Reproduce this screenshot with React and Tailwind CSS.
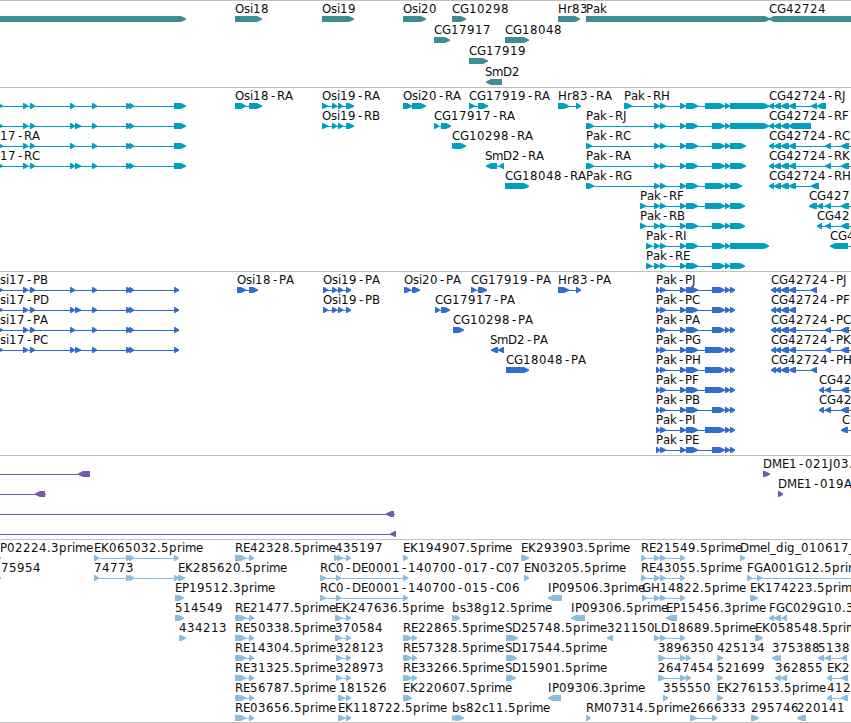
import React from "react";

// Pixel advances used to space the feature labels.
const ADVANCE = {
  C: 8, G: 9, O: 9, D: 9, R: 8, P: 7, A: 8, B: 7, E: 7, F: 7, H: 9, I: 4, J: 4, K: 8, L: 7,
  M: 10, N: 9, S: 7, a: 7, b: 8, c: 6, d: 8, e: 7, g: 8, i: 3, k: 7, l: 3, m: 11, p: 8, r: 5,
  s: 6, ".": 4, "-": 8, _: 6,
};

const labelPositions = (text, x) => {
  let at = x;
  return Array.from(text).map((ch) => {
    const here = ch === "-" ? at + 2 : at;
    at += ADVANCE[ch] ?? 8;
    return here;
  });
};

// f(row, label, labelX, blocks, options): blocks are [start, end] pairs.
const f = (row, label, x, blocks, o = {}) => ({ row, label, x, blocks, ...o });
const rev = { rev: true };
const revOut = { rev: true, to: 856 };

const genes = [
  f(0, "", 0, [[-5, 186]]),
  f(0, "Osi18", 235, [[235, 262]]),
  f(0, "Osi19", 322, [[322, 354]]),
  f(0, "Osi20", 403, [[403, 426]]),
  f(0, "CG10298", 452, [[452, 466]]),
  f(0, "Hr83", 558, [[558, 580]]),
  f(0, "Pak", 586, [[586, 770]]),
  f(0, "CG42724", 769, [[769, 860]], rev),
  f(1, "CG17917", 434, [[434, 450]]),
  f(1, "CG18048", 505, [[505, 529]]),
  f(2, "CG17919", 469, [[469, 488]]),
  f(3, "SmD2", 485, [[486, 502]], rev),
];

const osi17 = (extra, last) => [
  [-3, 3], [23, 28], [30, 35], [70, 75], ...(extra ? [[75, 81]] : []), [92, 97], [126, 131], [129, 134], last,
];
const osi19r = [[322, 328], [332, 337], [338, 343], [346, 354]];
const pakR = (first, mid, end) => [
  first, [654, 660], [660, 666], [680, 686], [686, 698], [mid, 725], [725, 730], [730, end],
];
const cg = [[769, 774], [774, 781], [781, 789], [789, 796]];

const transcripts = [
  f(0, "", 0, osi17(false, [174, 186]), { from: -5 }),
  f(1, "", 0, osi17(true, [174, 186]), { from: -5 }),
  f(2, "17-RA", 0, osi17(false, [174, 186]), { from: -5 }),
  f(3, "17-RC", 0, osi17(true, [174, 186]), { from: -5 }),
  f(0, "Osi18-RA", 235, [[235, 246], [249, 262]]),
  f(0, "Osi19-RA", 322, osi19r),
  f(1, "Osi19-RB", 322, osi19r),
  f(0, "Osi20-RA", 403, [[403, 412], [412, 426]]),
  f(0, "CG17919-RA", 469, [[469, 475], [478, 488]]),
  f(1, "CG17917-RA", 434, [[434, 439], [441, 451]]),
  f(2, "CG10298-RA", 452, [[452, 455], [454, 466]]),
  f(3, "SmD2-RA", 485, [[486, 497], [499, 504]], rev),
  f(4, "CG18048-RA", 505, [[505, 529]]),
  f(0, "Hr83-RA", 558, [[558, 569], [576, 581]]),
  f(0, "Pak-RH", 624, pakR([624, 632], 705, 769)),
  f(1, "Pak-RJ", 586, pakR([586, 594], 712, 769)),
  f(2, "Pak-RC", 586, pakR([586, 592], 712, 746)),
  f(3, "Pak-RA", 586, pakR([586, 594], 712, 746)),
  f(4, "Pak-RG", 586, pakR([586, 594], 705, 742)),
  f(5, "Pak-RF", 640, pakR([640, 646], 705, 745)),
  f(6, "Pak-RB", 640, pakR([640, 646], 712, 745)),
  f(7, "Pak-RI", 646, pakR([646, 652], 712, 769)),
  f(8, "Pak-RE", 646, pakR([646, 652], 712, 745)),
  f(0, "CG42724-RJ", 769, [...cg, [811, 817], [817, 826]], rev),
  f(1, "CG42724-RF", 769, [[769, 774], [774, 781], [781, 789], [788, 811]], rev),
  f(2, "CG42724-RC", 769, [...cg, [825, 831], [841, 849]], revOut),
  f(3, "CG42724-RK", 769, [...cg, [825, 831], [841, 849]], revOut),
  f(4, "CG42724-RH", 769, [...cg, [811, 819]], rev),
  f(5, "CG427", 809, [[809, 817], [817, 823], [825, 831], [841, 849]], revOut),
  f(6, "CG42", 817, [[817, 822], [825, 831], [841, 849]], revOut),
  f(7, "CG4", 830, [[830, 848]], revOut),
];

const osi19p = [[323, 328], [332, 337], [338, 343], [346, 351]];
const pakP = (mid) => [[656, 660], [660, 666], [680, 686], [686, 698], [mid, 725], [725, 730], [730, 735]];
const cgP = [[771, 776], [775, 781], [781, 789], [789, 796]];
const proteins = [
  f(0, "si17-PB", 0, osi17(false, [174, 179]), { from: -5 }),
  f(1, "si17-PD", 0, osi17(true, [174, 179]), { from: -5 }),
  f(2, "si17-PA", 0, osi17(false, [174, 179]), { from: -5 }),
  f(3, "si17-PC", 0, osi17(true, [174, 179]), { from: -5 }),
  f(0, "Osi18-PA", 237, [[237, 246], [249, 258]]),
  f(0, "Osi19-PA", 323, osi19p),
  f(1, "Osi19-PB", 323, osi19p),
  f(0, "Osi20-PA", 404, [[404, 411], [412, 420]]),
  f(0, "CG17919-PA", 471, [[471, 476], [478, 487]]),
  f(1, "CG17917-PA", 435, [[435, 440], [441, 450]]),
  f(2, "CG10298-PA", 453, [[453, 464]]),
  f(3, "SmD2-PA", 490, [[491, 498], [498, 504]], rev),
  f(4, "CG18048-PA", 506, [[506, 529]]),
  f(0, "Hr83-PA", 558, [[558, 569], [576, 581]]),
  f(0, "Pak-PJ", 656, pakP(712)),
  f(1, "Pak-PC", 656, pakP(712)),
  f(2, "Pak-PA", 656, pakP(712)),
  f(3, "Pak-PG", 656, pakP(705)),
  f(4, "Pak-PH", 656, pakP(705)),
  f(5, "Pak-PF", 656, pakP(705)),
  f(6, "Pak-PB", 656, pakP(712)),
  f(7, "Pak-PI", 656, pakP(705)),
  f(8, "Pak-PE", 656, pakP(712)),
  f(0, "CG42724-PJ", 771, [...cgP, [811, 817]], rev),
  f(1, "CG42724-PF", 771, cgP, rev),
  f(2, "CG42724-PC", 771, [...cgP, [825, 831], [841, 849]], revOut),
  f(3, "CG42724-PK", 771, [...cgP, [825, 831], [841, 849]], revOut),
  f(4, "CG42724-PH", 771, [...cgP, [811, 817]], rev),
  f(5, "CG42", 819, [[819, 824], [825, 831], [841, 849]], revOut),
  f(6, "CG42", 819, [[819, 824], [825, 831], [841, 849]], revOut),
  f(7, "C", 842, [[841, 848]], revOut),
];

const clones = [
  f(0, "", 0, [[78, 90]], { rev: true, from: -5 }),
  f(1, "", 0, [[35, 45]], { rev: true, from: -5, to: 46 }),
  f(2, "", 0, [[386, 394]], { rev: true, from: -5, to: 395 }),
  f(3, "", 0, [[390, 396]], { rev: true, from: -5 }),
  f(0, "DME1-021J03.", 763, [[763, 770]]),
  f(1, "DME1-019A", 778, [[778, 783]]),
];

const ek = [[94, 99], [126, 131], [129, 134], [174, 179]];
const re = [[235, 246], [249, 254]];
const rc = [[320, 326], [336, 341], [403, 408]];
const re2 = [[641, 646], [654, 660], [660, 666], [680, 685]];
const re3 = [[403, 412], [412, 417]];
const osiA = [[335, 338], [336, 342], [346, 351]];
const osiB = [[336, 342], [346, 351]];
const osiC = [[338, 345], [346, 351]];
const ests = [
  f(0, "P02224.3prime", 0, [[-4, 1]]),
  f(0, "EK065032.5prime", 94, ek),
  f(0, "RE42328.5prime", 235, re),
  f(0, "435197", 335, [[334, 338], [337, 343], [346, 351]]),
  f(0, "EK194907.5prime", 403, [[403, 408]]),
  f(0, "EK293903.5prime", 521, [[521, 529]]),
  f(0, "RE21549.5prime", 641, re2),
  f(0, "Dmel_dig_010617_", 740, [[740, 745]]),
  f(1, "75954", 1, [[-4, 1]]),
  f(1, "74773", 94, ek),
  f(1, "EK285620.5prime", 178, [[178, 185]]),
  f(1, "RC0-DE0001-140700-017-C07", 320, rc),
  f(1, "EN03205.5prime", 524, [[524, 529]]),
  f(1, "RE43055.5prime", 641, re2),
  f(1, "FGA001G12.5prim", 747, [[747, 752], [757, 762]], { to: 856 }),
  f(2, "EP19512.3prime", 175, [[175, 184]]),
  f(2, "RC0-DE0001-140700-015-C06", 320, rc),
  f(2, "IP09506.3prime", 548, [[548, 562]], rev),
  f(2, "GH14822.5prime", 642, [[642, 647], [654, 660], [660, 666], [680, 685]]),
  f(2, "EK174223.5prim", 750, [[750, 758]]),
  f(3, "514549", 175, [[175, 184]]),
  f(3, "RE21477.5prime", 235, re),
  f(3, "EK247636.5prime", 335, osiA),
  f(3, "bs38g12.5prime", 452, [[452, 456], [455, 460]]),
  f(3, "IP09306.5prime", 571, [[571, 585]], rev),
  f(3, "EP15456.3prime", 666, [[666, 677]], rev),
  f(3, "FGC029G10.3", 769, [[769, 774], [774, 781], [782, 787]], rev),
  f(4, "434213", 179, [[179, 186]]),
  f(4, "RE50338.5prime", 235, re),
  f(4, "370584", 335, osiA),
  f(4, "RE22865.5prime", 403, re3),
  f(4, "SD25748.5prime", 505, [[506, 518]]),
  f(4, "321150", 607, [[607, 613]], rev),
  f(4, "LD18689.5prime", 654, [[654, 660], [660, 666], [680, 685]]),
  f(4, "EK058548.5prim", 755, [[755, 763]]),
  f(5, "RE14304.5prime", 235, re),
  f(5, "328123", 336, osiB),
  f(5, "RE57328.5prime", 403, re3),
  f(5, "SD17544.5prime", 505, [[506, 517]]),
  f(5, "3896350", 658, [[658, 665], [680, 686], [686, 691]]),
  f(5, "425134", 717, [[717, 723]]),
  f(5, "375388", 772, [[772, 778], [776, 781]], rev),
  f(5, "5138", 818, [[818, 824], [825, 831], [841, 847]], rev),
  f(6, "RE31325.5prime", 235, re),
  f(6, "328973", 336, osiB),
  f(6, "RE33266.5prime", 403, re3),
  f(6, "SD15901.5prime", 505, [[506, 516]]),
  f(6, "2647454", 658, [[658, 665], [680, 686], [686, 691]]),
  f(6, "521699", 717, [[717, 723]]),
  f(6, "362855", 775, [[775, 781], [781, 787]], rev),
  f(6, "EK2", 827, [[827, 832], [841, 848]], rev),
  f(7, "RE56787.5prime", 235, re),
  f(7, "181526", 339, osiC),
  f(7, "EK220607.5prime", 403, [[403, 412]]),
  f(7, "IP09306.3prime", 548, [[548, 561]], rev),
  f(7, "355550", 663, [[663, 668]]),
  f(7, "EK276153.5prime", 717, [[717, 723]]),
  f(7, "412", 827, [[827, 832], [841, 848]], rev),
  f(8, "RE03656.5prime", 235, re),
  f(8, "EK118722.5prime", 338, osiC),
  f(8, "bs82c11.5prime", 452, [[452, 456], [455, 464]]),
  f(8, "RM07314.5prime", 586, [[586, 591]]),
  f(8, "2666333", 690, [[690, 697], [712, 717]]),
  f(8, "295746", 751, [[751, 759]]),
  f(8, "220141", 797, [[797, 806]], rev),
];

function Feature({ row, label, x, blocks, rev: back, from, to, pitch }) {
  const y = row * pitch + 15;
  const start = from ?? blocks[0][0];
  const end = to ?? blocks[blocks.length - 1][1];
  return (
    <g>
      {(blocks.length > 1 || from !== undefined || to !== undefined) && (
        <rect x={start} y={y + 3} width={end - start} height="1" shapeRendering="crispEdges" />
      )}
      {blocks.map(([a, b], i) => {
        const head = Math.min(5, b - a - 1);
        const points = back
          ? `${b},${y} ${a + head},${y} ${a},${y + 2.4} ${a},${y + 3.8} ${a + head},${y + 6} ${b},${y + 6}`
          : `${a},${y} ${b - head},${y} ${b},${y + 2.4} ${b},${y + 3.8} ${b - head},${y + 6} ${a},${y + 6}`;
        return <polygon key={i} points={points} />;
      })}
      {label && (
        <text x={labelPositions(label, x).join(" ")} y={y - 3} className="fill-[#0c0c0c]">
          {label}
        </text>
      )}
    </g>
  );
}

function Track({ features, className, pitch = 20 }) {
  return (
    <section className={`w-full shrink-0 overflow-hidden border-t border-[#c0c0c0] ${className}`}>
      <svg className="block h-full w-[851px] fill-current font-['DejaVu_Sans',sans-serif] text-[11.75px]">
        {features.map((item, i) => (
          <Feature key={i} {...item} pitch={pitch} />
        ))}
      </svg>
    </section>
  );
}

export default function App() {
  return (
    <main className="flex h-[723px] w-[851px] flex-col overflow-hidden bg-white">
      <Track features={genes} pitch={21} className="h-[87px] text-[#3f8c93]" />
      <Track features={transcripts} className="h-[184px] text-[#009fc2]" />
      <Track features={proteins} className="h-[184px] text-[#316dce]" />
      <Track features={clones} className="h-[84px] text-[#7658a8]" />
      <Track features={ests} className="h-[183px] text-[#88bddf]" />
      <div className="h-px shrink-0 bg-[#c0c0c0]" />
    </main>
  );
}
